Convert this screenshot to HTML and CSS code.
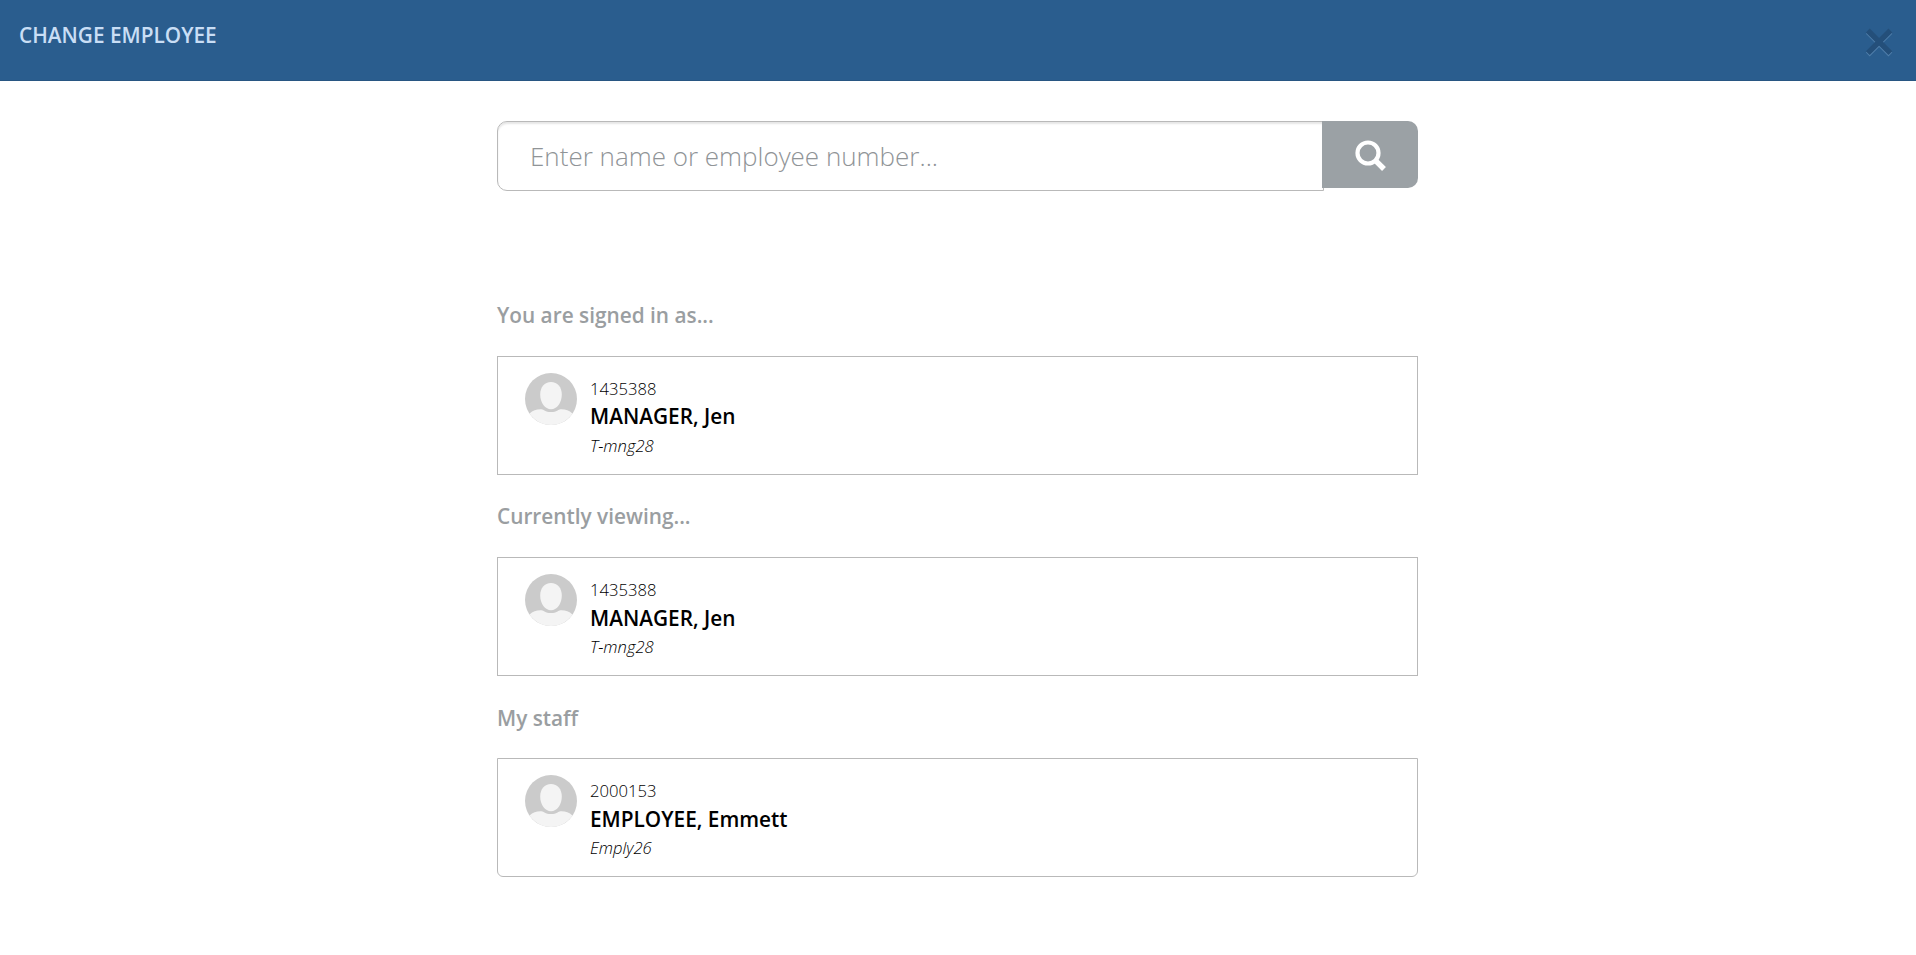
FILE: index.html
```html
<!DOCTYPE html>
<html lang="en">
<head>
<meta charset="utf-8">
<title>Change employee</title>
<link rel="stylesheet" href="styles.css">
</head>
<body>
<svg class="sprite" aria-hidden="true">
  <symbol id="avatar" viewBox="0 0 52 52">
    <circle cx="26" cy="26" r="26" fill="#cbcbcb"/>
    <path d="M4.500 40.600C8 37 12 36 16.500 36.200c2.500.2 3.500 2.800 9.500 2.800s7-2.600 9.500-2.800C40 36 44 37 47.500 40.600A26 26 0 0 1 4.500 40.600Z" fill="#f4f4f4"/>
    <path d="M26 9c6.500 0 10.800 5 10.800 12.500C36.800 29.500 32 36.300 26 36.300S15.200 29.500 15.200 21.500C15.200 14 19.500 9 26 9Z" fill="#f4f4f4"/>
  </symbol>
</svg>
<header class="topbar">
  <h1 class="topbar-title">CHANGE EMPLOYEE</h1>
  <button class="close" aria-label="Close">
    <svg width="30" height="30" viewBox="0 0 30 30" fill="none" stroke-width="5.400">
      <path d="M3.800 3.900 26.400 26.500M26.400 3.900 3.800 26.500" stroke="#4f7eaa"/>
      <path d="M3.800 2.500 26.400 25.100M26.400 2.500 3.800 25.100" stroke="#244f7a"/>
    </svg>
  </button>
</header>
<main class="content">
  <form class="search">
    <input class="search-input" type="text" placeholder="Enter name or employee number...">
    <button class="search-button" type="button" aria-label="Search">
      <svg width="32" height="32" viewBox="0 0 32 32" fill="none" stroke="#fff">
        <circle cx="13" cy="13" r="10.500" stroke-width="4.200"/>
        <path d="M20.300 20.300 29 29" stroke-width="5.400"/>
      </svg>
    </button>
  </form>
  <section class="group">
    <h2 class="group-title">You are signed in as...</h2>
    <article class="card">
      <svg class="avatar"><use href="#avatar"/></svg>
      <div class="person">
        <span class="number">1435388</span>
        <strong class="name">MANAGER, Jen</strong>
        <em class="position">T-mng28</em>
      </div>
    </article>
  </section>
  <section class="group">
    <h2 class="group-title">Currently viewing...</h2>
    <article class="card">
      <svg class="avatar"><use href="#avatar"/></svg>
      <div class="person">
        <span class="number">1435388</span>
        <strong class="name name-low">MANAGER, Jen</strong>
        <em class="position">T-mng28</em>
      </div>
    </article>
  </section>
  <section class="group">
    <h2 class="group-title group-title-low">My staff</h2>
    <article class="card card-last">
      <svg class="avatar"><use href="#avatar"/></svg>
      <div class="person">
        <span class="number">2000153</span>
        <strong class="name name-low">EMPLOYEE, Emmett</strong>
        <em class="position">Emply26</em>
      </div>
    </article>
  </section>
</main>
</body>
</html>
```
FILE: styles.css
```css
* { box-sizing: border-box; }
body {
  margin: 0;
  background: #fff;
  color: #000;
  font-family: "Open Sans", sans-serif;
}
.sprite { display: none; }
.topbar {
  display: flex;
  justify-content: space-between;
  align-items: flex-start;
  height: 81px;
  padding: 21px 22px 0 19px;
  background: #2a5d8e;
  border-bottom: 1px solid #285682;
}
.topbar-title {
  margin: 0;
  font-size: 20.800px;
  font-weight: 600;
  line-height: 29px;
  color: #c9def5;
}
.close {
  display: flex;
  margin-top: 7px;
  padding: 0;
  border: 0;
  background: none;
}
.content {
  width: 921px;
  margin: 0 0 0 497px;
  padding-top: 40px;
}
.search {
  display: flex;
  align-items: flex-start;
  height: 153px;
}
.search-input {
  width: 827px;
  height: 70px;
  padding: 0 32px;
  border: 1px solid #b9b9b9;
  border-radius: 10px 0 0 10px;
  background: #fff;
  box-shadow: inset 0 2px 2px rgba(0, 0, 0, .1);
  font-family: inherit;
  font-size: 26px;
  font-weight: 300;
  outline: none;
}
.search-input::placeholder { color: #909497; opacity: 1; }
.search-button {
  display: flex;
  align-items: center;
  justify-content: center;
  width: 96px;
  height: 67px;
  margin-left: -2px;
  padding: 2px 0 0 2px;
  border: 0;
  border-radius: 0 10px 10px 0;
  background: #9ba1a5;
}
.group { height: 201px; padding-top: 25px; }
.group-title {
  height: 30px;
  margin: 0 0 27px;
  padding-top: 1px;
  font-size: 20.800px;
  font-weight: 600;
  line-height: 30px;
  color: #9a9ea1;
}
.group-title-low { padding-top: 2px; }
.card {
  display: flex;
  height: 119px;
  padding: 16px 27px 0;
  border: 1px solid #b9b9b9;
}
.card-last { border-radius: 0 0 6px 6px; }
.avatar { width: 52px; height: 52px; }
.person {
  display: flex;
  flex-direction: column;
  padding: 4px 0 0 13px;
}
.number { font-size: 16.640px; font-weight: 300; line-height: 24px; }
.name { height: 31px; font-size: 20.800px; font-weight: 600; line-height: 31px; }
.name-low { padding-top: 1px; }
.position { font-size: 16.640px; font-weight: 300; line-height: 27px; }
```
